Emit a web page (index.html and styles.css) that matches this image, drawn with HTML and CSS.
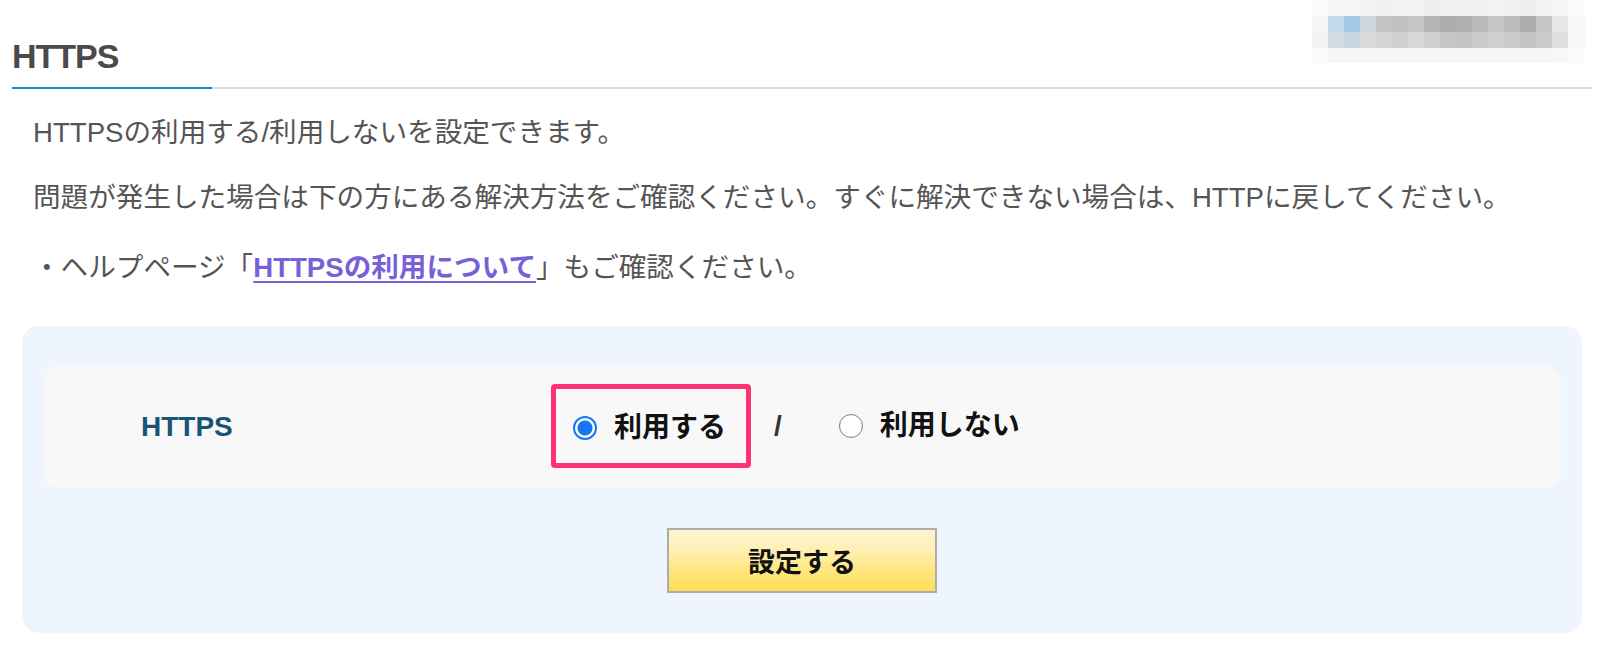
FILE: index.html
```html
<!DOCTYPE html>
<html lang="ja">
<head>
<meta charset="utf-8">
<title>HTTPS</title>
<link rel="stylesheet" href="styles.css">
</head>
<body>
<section class="section">
  <header class="section-head">
    <h2 class="section-title">HTTPS</h2>
    <div class="mosaic" aria-hidden="true">
      <div class="mosaic-row r1"></div>
      <div class="mosaic-row r2"></div>
      <div class="mosaic-row r3"></div>
      <div class="mosaic-row r4"></div>
    </div>
  </header>

  <p class="desc desc-1">HTTPSの利用する/利用しないを設定できます。</p>
  <p class="desc desc-2">問題が発生した場合は下の方にある解決方法をご確認ください。すぐに解決できない場合は、HTTPに戻してください。</p>
  <p class="desc desc-3">・ヘルプページ「<a class="help-link" href="#">HTTPSの利用について</a>」もご確認ください。</p>

  <form class="panel">
    <div class="setting-row">
      <div class="setting-label">HTTPS</div>
      <div class="setting-options">
        <label class="option option-highlight">
          <input class="radio" type="radio" name="https" checked>
          <span class="option-text">利用する</span>
        </label>
        <span class="sep">/</span>
        <label class="option">
          <input class="radio" type="radio" name="https">
          <span class="option-text">利用しない</span>
        </label>
      </div>
    </div>
    <div class="actions">
      <button class="submit" type="button">設定する</button>
    </div>
  </form>
</section>
</body>
</html>
```

FILE: styles.css
```css
html, body {
  margin: 0;
  padding: 0;
  background: #ffffff;
}

body {
  font-family: "Liberation Sans", "Noto Sans CJK JP", sans-serif;
  color: #555555;
}

.section {
  margin-left: 12px;
  width: 1580px;
}

.section-head {
  display: flex;
  justify-content: space-between;
  height: 87px;
  border-bottom: 2px solid #dcdcdc;
}

.section-title {
  align-self: flex-end;
  margin: 0 0 -2px 0;
  width: 200px;
  padding-bottom: 11px;
  border-bottom: 2px solid #1a87c8;
  font-size: 34px;
  line-height: 40px;
  font-weight: 700;
  letter-spacing: -1px;
  color: #4a4a4a;
}

.mosaic {
  align-self: flex-start;
  width: 273px;
  margin-right: 7px;
  display: flex;
  flex-direction: column;
}

.mosaic-row {
  height: 16px;
}

.mosaic-row.r4 {
  height: 15px;
}

.mosaic-row.r1 {
  background: linear-gradient(to right,
    #fbfbfb 0 16px, #f6f6f6 16px 32px, #f6f5f3 32px 48px, #f2f2f2 48px 64px,
    #eff1f0 64px 80px, #f3f3f3 80px 96px, #f4f4f4 96px 112px, #efefef 112px 128px,
    #f0f0f0 128px 144px, #f1f1f1 144px 160px, #f1f1f1 160px 176px, #f3f3f3 176px 192px,
    #f1f1f1 192px 208px, #eeeeee 208px 224px, #f2f2f2 224px 240px, #f6f6f6 240px 256px,
    #fbfbfb 256px 273px);
}

.mosaic-row.r2 {
  background: linear-gradient(to right,
    #f7f5f3 0 16px, #c3d9e9 16px 32px, #a4c8e4 32px 48px, #d0d8dd 48px 64px,
    #c4c3c1 64px 80px, #c1c3c2 80px 96px, #c6c6c6 96px 112px, #b5b5b5 112px 128px,
    #acacac 128px 144px, #afafaf 144px 160px, #bababa 160px 176px, #c6c6c6 176px 192px,
    #bcbcbc 192px 208px, #adadad 208px 224px, #c5c5c5 224px 240px, #e6e6e6 240px 256px,
    #f7f7f7 256px 273px);
}

.mosaic-row.r3 {
  background: linear-gradient(to right,
    #f4f3f1 0 16px, #d3dde6 16px 32px, #c6d5e2 32px 48px, #dadadd 48px 64px,
    #d6d6d6 64px 80px, #d0d0d0 80px 96px, #d8d8d8 96px 112px, #d0d0d0 112px 128px,
    #c6c6c6 128px 144px, #c4c4c4 144px 160px, #cbcbcb 160px 176px, #d0d0d0 176px 192px,
    #cacaca 192px 208px, #c4c4c4 208px 224px, #cbcbcb 224px 240px, #e0e0e0 240px 256px,
    #f7f7f7 256px 273px);
}

.mosaic-row.r4 {
  background: linear-gradient(to right,
    #fbfbfb 0 16px, #f6f6f6 16px 32px, #f5f6f8 32px 48px, #f6f6f6 48px 240px,
    #f8f8f8 240px 256px, #fbfbfb 256px 273px);
}

.desc {
  margin: 0;
  padding-left: 21px;
  font-size: 27.6px;
  line-height: 40px;
  color: #555555;
}

.desc-1 {
  margin-top: 24px;
}

.desc-2 {
  margin-top: 25px;
}

.desc-3 {
  margin-top: 30px;
}

.help-link {
  color: #7760d8;
  font-weight: 700;
  text-decoration: underline;
  text-underline-offset: 4px;
  text-decoration-thickness: 2px;
}

.panel {
  margin: 38px 10px 0 10px;
  padding: 40px 21px;
  background: #eef5fe;
  border-radius: 17px;
}

.setting-row {
  display: flex;
  align-items: center;
  height: 122px;
  background: #f8f8f8;
  border-radius: 16px;
}

.setting-label {
  width: 410px;
  padding-left: 98px;
  font-size: 28px;
  font-weight: 700;
  color: #175573;
}

.setting-options {
  display: flex;
  align-items: center;
  margin-top: -3px;
}

.option {
  display: flex;
  align-items: center;
  gap: 17px;
  font-size: 28px;
  line-height: 40px;
  font-weight: 700;
  color: #111111;
  cursor: pointer;
}

.option-highlight {
  padding: 19px 20px 15px 17px;
  border: 5px solid #fe3270;
  border-radius: 4px;
}

.radio {
  appearance: none;
  -webkit-appearance: none;
  margin: 0;
  width: 24px;
  height: 24px;
  border-radius: 50%;
  border: 1.5px solid #7a7a7a;
  background: #ffffff;
  box-sizing: border-box;
}

.radio:checked {
  border: 2px solid #1677f2;
  background: radial-gradient(circle, #1677f2 0 7px, #ffffff 8px);
}

.sep {
  margin: 0 57px 0 23px;
  font-size: 28px;
  font-weight: 700;
  color: #333333;
}

.actions {
  display: flex;
  justify-content: center;
  margin-top: 40px;
}

.submit {
  width: 270px;
  height: 65px;
  border: 2px solid #a9adae;
  border-radius: 0;
  background: linear-gradient(to bottom, #fff4cc 0%, #fff0b8 30%, #ffe57a 70%, #ffdd57 100%);
  font-family: "Liberation Sans", "Noto Sans CJK JP", sans-serif;
  font-size: 27px;
  font-weight: 700;
  color: #111111;
  cursor: pointer;
}
```
